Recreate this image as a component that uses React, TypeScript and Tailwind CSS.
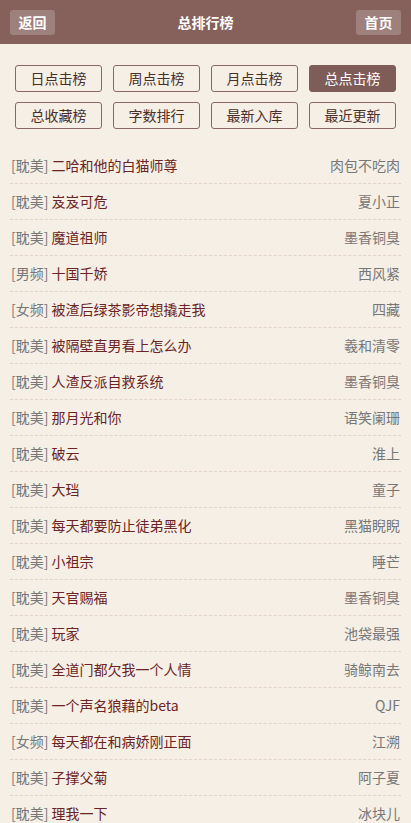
import React from 'react'

const tabs = ['日点击榜', '周点击榜', '月点击榜', '总点击榜', '总收藏榜', '字数排行', '最新入库', '最近更新']

const books = [
  ['耽美', '二哈和他的白猫师尊', '肉包不吃肉'],
  ['耽美', '岌岌可危', '夏小正'],
  ['耽美', '魔道祖师', '墨香铜臭'],
  ['男频', '十国千娇', '西风紧'],
  ['女频', '被渣后绿茶影帝想撬走我', '四藏'],
  ['耽美', '被隔壁直男看上怎么办', '羲和清零'],
  ['耽美', '人渣反派自救系统', '墨香铜臭'],
  ['耽美', '那月光和你', '语笑阑珊'],
  ['耽美', '破云', '淮上'],
  ['耽美', '大珰', '童子'],
  ['耽美', '每天都要防止徒弟黑化', '黑猫睨睨'],
  ['耽美', '小祖宗', '睡芒'],
  ['耽美', '天官赐福', '墨香铜臭'],
  ['耽美', '玩家', '池袋最强'],
  ['耽美', '全道门都欠我一个人情', '骑鲸南去'],
  ['耽美', '一个声名狼藉的beta', 'QJF'],
  ['女频', '每天都在和病娇刚正面', '江溯'],
  ['耽美', '子撑父菊', '阿子夏'],
  ['耽美', '理我一下', '冰块儿'],
]

export default function App() {
  return (
    <div className="min-h-screen bg-[#f5efe6] font-['Microsoft_YaHei','Noto_Sans_CJK_SC',sans-serif] text-[14px]">
      <header className="h-[44px] bg-[#86615c] flex items-center justify-between px-[10px]">
        <button className="h-[25px] w-[45px] rounded-[3px] bg-white/20 text-white font-bold text-[14px]">返回</button>
        <h1 className="text-white font-bold text-[14px]">总排行榜</h1>
        <button className="h-[25px] w-[45px] rounded-[3px] bg-white/20 text-white font-bold text-[14px]">首页</button>
      </header>

      <div className="grid grid-cols-4 gap-x-[11px] gap-y-[10px] px-[15px] pt-[21px]">
        {tabs.map((t) => (
          <button
            key={t}
            className={
              t === '总点击榜'
                ? 'h-[27px] rounded-[3px] border border-[#7e5c57] bg-[#7e5c57] text-white'
                : 'h-[27px] rounded-[3px] border border-[#8a6762] text-[#4a2e2a]'
            }
          >
            {t}
          </button>
        ))}
      </div>

      <ul className="px-[10px] pt-[19px]">
        {books.map(([cat, title, author]) => (
          <li
            key={title}
            className="h-[36px] flex items-center justify-between px-px border-b border-dashed border-[#e2d2cb]"
          >
            <span>
              <span className="text-[#777]">[{cat}] </span>
              <span className="text-[#6b2424]">{title}</span>
            </span>
            <span className="text-[#777]">{author}</span>
          </li>
        ))}
      </ul>
    </div>
  )
}
